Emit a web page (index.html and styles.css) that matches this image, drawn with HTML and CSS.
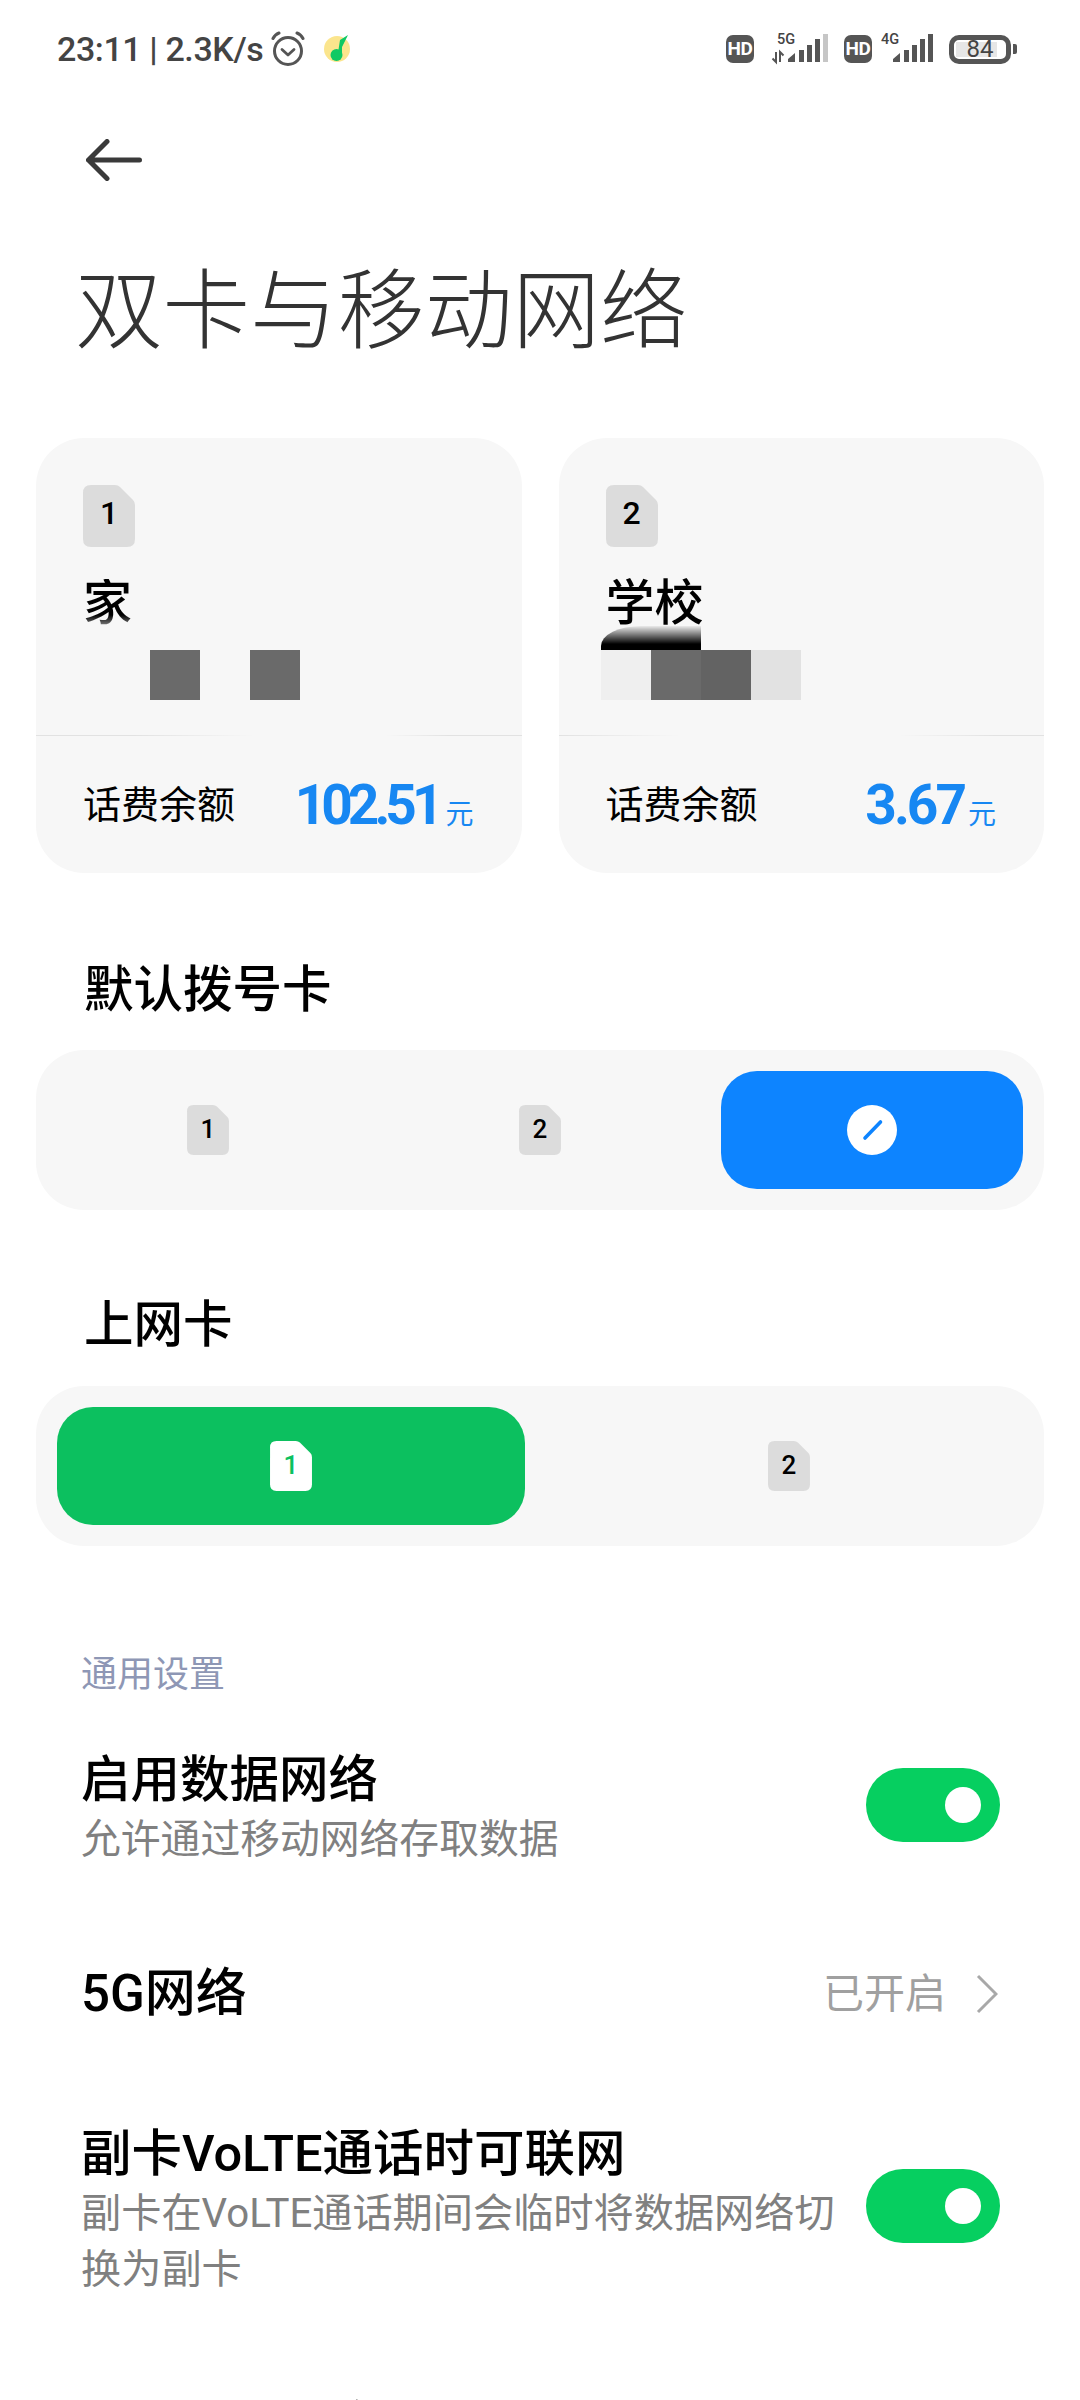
FILE: index.html
```html
<!DOCTYPE html>
<html lang="zh-CN">
<head>
<meta charset="utf-8">
<title>双卡与移动网络</title>
<link rel="stylesheet" href="styles.css">
</head>
<body>
<svg class="defs" width="0" height="0" aria-hidden="true">
  <symbol id="sim" viewBox="0 0 52 62"><path d="M8 0H32Q35 0 37 2L50 15Q52 17 52 20V54Q52 62 44 62H8Q0 62 0 54V8Q0 0 8 0Z"/></symbol>
</svg>
<main class="page">
  <header class="status">
    <div class="status-left">
      <span class="clock">23:11 | 2.3K/s</span>
      <svg class="alarm" viewBox="0 0 34 36" fill="none" stroke="#555" stroke-linecap="round" stroke-linejoin="round">
        <circle cx="17" cy="20" r="13.5" stroke-width="3"/>
        <path d="M11 18.5L17 24L23 18.5" stroke-width="2.8"/>
        <path d="M2 7.5Q4 3.5 8 2" stroke-width="3"/>
        <path d="M32 7.5Q30 3.5 26 2" stroke-width="3"/>
      </svg>
      <svg class="music" viewBox="0 0 34 34">
        <circle cx="17" cy="17" r="13" fill="#fbe58d"/>
        <path d="M17.5 24L20 8L28 3L22 15L22 24Z" fill="#0fc964"/>
        <circle cx="16.5" cy="23" r="6" fill="#0fc964"/>
      </svg>
    </div>
    <div class="status-right">
      <span class="hd">HD</span>
      <svg class="sig sig-5g" viewBox="0 -4 60 40">
        <text x="7" y="11" class="sig-text">5G</text>
        <path d="M6 19V29L2.500 25.500M10 29V19L13.500 22.500" fill="none" stroke="#555" stroke-width="2"/>
        <path d="M18 29V26L25 20V29ZM29 29V17H34V29ZM37 29V12H42V29ZM45 29V6H50V29Z" fill="#555"/>
        <path d="M53 29V1H58V29Z" fill="#c6c6c6"/>
      </svg>
      <span class="hd hd-b">HD</span>
      <svg class="sig sig-4g" viewBox="0 -4 55 40">
        <text x="1" y="11" class="sig-text">4G</text>
        <path d="M13 29V26L20 20V29ZM24 29V17H29V29ZM32 29V12H37V29ZM40 29V6H45V29ZM48 29V1H53V29Z" fill="#555"/>
      </svg>
      <span class="battery">84</span>
      <span class="nub"></span>
    </div>
  </header>

  <nav class="topbar">
    <svg class="back" viewBox="0 0 56 42" fill="none" stroke="#3a3a3a" stroke-width="5" stroke-linecap="round" stroke-linejoin="round">
      <path d="M21 2.500L2.500 21L21 39.500M2.500 21H53.500"/>
    </svg>
  </nav>

  <h1 class="title">双卡与移动网络</h1>

  <section class="cards">
    <article class="card">
      <div class="card-top">
        <div class="sim sim-lg"><svg class="sim-shape"><use href="#sim"/></svg><span class="sim-num">1</span></div>
        <div class="name name-fade">家</div>
        <div class="mosaic mosaic-home">
          <span class="cell dark"></span><span class="cell"></span><span class="cell dark"></span>
        </div>
      </div>
      <div class="divider divider-a"></div>
      <div class="balance">
        <span class="balance-label">话费余额</span>
        <span class="balance-value"><b class="amount amount-tight">102.51</b><small class="unit">元</small></span>
      </div>
    </article>
    <article class="card">
      <div class="card-top">
        <div class="sim sim-lg"><svg class="sim-shape"><use href="#sim"/></svg><span class="sim-num">2</span></div>
        <div class="name">学校</div>
        <div class="mosaic mosaic-school">
          <span class="smear"></span>
          <span class="cell pale"></span><span class="cell dark"></span><span class="cell darker"></span><span class="cell light"></span>
        </div>
      </div>
      <div class="divider divider-b"></div>
      <div class="balance">
        <span class="balance-label">话费余额</span>
        <span class="balance-value"><b class="amount">3.67</b><small class="unit">元</small></span>
      </div>
    </article>
  </section>

  <h2 class="section-title first">默认拨号卡</h2>
  <div class="segment">
    <div class="seg-item"><div class="sim sim-sm"><svg class="sim-shape"><use href="#sim"/></svg><span class="sim-num">1</span></div></div>
    <div class="seg-item"><div class="sim sim-sm"><svg class="sim-shape"><use href="#sim"/></svg><span class="sim-num">2</span></div></div>
    <div class="seg-item active-blue">
      <svg class="edit" viewBox="0 0 50 50"><circle cx="25" cy="25" r="25" fill="#fff"/><path d="M18 33L33.500 17" stroke="#0d84ff" stroke-width="3.600" stroke-linecap="round"/></svg>
    </div>
  </div>

  <h2 class="section-title second">上网卡</h2>
  <div class="segment">
    <div class="seg-item active-green"><div class="sim sim-sm sim-on"><svg class="sim-shape"><use href="#sim"/></svg><span class="sim-num">1</span></div></div>
    <div class="seg-item"><div class="sim sim-sm"><svg class="sim-shape"><use href="#sim"/></svg><span class="sim-num">2</span></div></div>
  </div>

  <div class="group-label">通用设置</div>

  <div class="row row-1">
    <div class="row-text">
      <div class="row-title">启用数据网络</div>
      <div class="row-sub">允许通过移动网络存取数据</div>
    </div>
    <span class="toggle"><i class="thumb"></i></span>
  </div>

  <div class="row row-2">
    <div class="row-title">5G网络</div>
    <div class="row-value">已开启
      <svg class="chevron" viewBox="0 0 22 40" fill="none" stroke="#a8a8a8" stroke-width="3"><path d="M2 2L20 20L2 38"/></svg>
    </div>
  </div>

  <div class="row row-3">
    <div class="row-text">
      <div class="row-title">副卡VoLTE通话时可联网</div>
      <div class="row-sub">副卡在VoLTE通话期间会临时将数据网络切换为副卡</div>
    </div>
    <span class="toggle"><i class="thumb"></i></span>
  </div>

  <div class="row row-4">
    <div class="row-title">智能切换网络</div>
  </div>
</main>
</body>
</html>
```
FILE: styles.css
```css
* { box-sizing: border-box; }
html, body { margin: 0; padding: 0; background: #fff; }
body { font-family: Roboto, "Noto Sans CJK SC", sans-serif; color: #000; }
.defs { position: absolute; }
.page { width: 1080px; height: 2400px; overflow: hidden; }

/* status bar */
.status { display: flex; justify-content: space-between; align-items: center; height: 64px; margin-top: 17px; padding: 0 63px 0 57px; }
.status-left, .status-right { display: flex; align-items: center; }
.clock { font-size: 34px; font-weight: 500; color: #444; line-height: 40px; letter-spacing: -0.4px; }
.alarm { width: 34px; height: 36px; margin-left: 8px; }
.music { width: 34px; height: 34px; margin-left: 15px; }
.hd { width: 28px; height: 28px; border-radius: 7px; background: #555; color: #fff; font-size: 19px; font-weight: 700; line-height: 28px; text-align: center; letter-spacing: -0.5px; }
.hd-b { margin-left: 14px; }
.sig { height: 40px; display: block; }
.sig-5g { width: 60px; margin-left: 16px; }
.sig-4g { width: 55px; margin-left: 8px; }
.sig-text { font-family: Roboto, sans-serif; font-size: 14.500px; font-weight: 500; fill: #444; }
.battery { width: 62px; height: 29px; margin-left: 14px; border: 5px solid #555; border-radius: 10px; font-size: 24px; line-height: 19px; color: #444; text-align: center; background: linear-gradient(#e6e6e6, #e6e6e6) 2px 2px / 41px 15px no-repeat; }
.nub { width: 4px; height: 10px; margin-left: 2px; border-radius: 0 2px 2px 0; background: #555; }

/* header */
.topbar { padding: 58px 0 0 86px; height: 101px; }
.back { display: block; width: 56px; height: 42px; }
.title { margin: 70px 0 0 75px; font-size: 87.500px; font-weight: 300; line-height: 120px; color: #333; white-space: nowrap; }

/* sim cards */
.cards { display: flex; gap: 37px; margin: 66px 36px 0; }
.card { flex: 1; height: 435px; border-radius: 48px; background: #f7f7f7; }
.card-top { height: 297px; padding: 47px 0 0 47px; }
.sim { position: relative; display: flex; align-items: center; justify-content: center; }
.sim-shape { position: absolute; inset: 0; width: 100%; height: 100%; fill: #dcdcdc; }
.sim-num { position: relative; font-weight: 500; color: #000; }
.sim-lg { width: 52px; height: 62px; }
.sim-lg .sim-num { font-size: 32px; margin: -6px 0 0 0; }
.sim-sm { width: 42px; height: 50px; }
.sim-sm .sim-num { font-size: 26px; margin: -2px 0 0 0; }
.sim-on .sim-shape { fill: #fff; }
.sim-on .sim-num { color: #0cc05f; }
.name { height: 50px; margin: 32px 0 0 0; font-size: 49px; font-weight: 500; line-height: 50px; white-space: nowrap; }
.name-fade { width: 49px; background: linear-gradient(#000 72%, #aaa 100%); -webkit-background-clip: text; background-clip: text; color: transparent; }
.mosaic { position: relative; display: flex; height: 50px; margin-top: 21px; }
.mosaic-home { margin-left: 67px; }
.mosaic-school { margin-left: -5px; }
.cell { width: 50px; height: 50px; }
.dark { background: #6a6a6a; }
.darker { background: #636363; }
.pale { background: #efefef; }
.light { background: #e2e2e2; }
.smear { position: absolute; left: 0; top: -24px; width: 100px; height: 24px; border-top-left-radius: 40px 20px; background: linear-gradient(rgba(0,0,0,0.05), #000 75%); }
.divider { height: 1px; }
.divider-a { background: linear-gradient(90deg, #e2e2e2 0, #e2e2e2 20%, #f7f7f7 45%, #f7f7f7 72%, #e2e2e2 85%, #e2e2e2 100%); }
.divider-b { background: linear-gradient(90deg, #e2e2e2 0, #f7f7f7 25%, #f7f7f7 70%, #e2e2e2 90%, #e2e2e2 100%); }
.balance { display: flex; justify-content: space-between; align-items: center; height: 137px; padding: 0 48px 0 47px; }
.balance-label { font-size: 38px; line-height: 60px; }
.balance-value { color: #1787f2; white-space: nowrap; }
.amount { font-size: 55px; font-weight: 700; line-height: 60px; letter-spacing: -3px; }
.amount-tight { letter-spacing: -5px; }
.unit { font-size: 28px; margin-left: 4px; }
.amount-tight + .unit { margin-left: 7px; }

/* sections */
.section-title { margin: 0 0 0 84px; font-size: 49.500px; font-weight: 500; line-height: 60px; }
.first { margin-top: 87px; }
.second { margin-top: 85px; }
.segment { display: flex; gap: 30px; height: 160px; margin: 30px 36px 0; padding: 21px; border-radius: 48px; background: #f7f7f7; }
.second + .segment { margin-top: 31px; }
.seg-item { flex: 1; display: flex; align-items: center; justify-content: center; border-radius: 36px; }
.active-blue { background: #0d84ff; }
.active-green { background: #0cc05f; }
.edit { width: 50px; height: 50px; }

/* settings */
.group-label { margin: 104px 0 0 81px; font-size: 36px; line-height: 50px; color: #8e97b5; }
.row { display: flex; justify-content: space-between; align-items: center; padding: 0 80px 0 81px; }
.row-1 { margin-top: 52px; }
.row-2 { margin-top: 98px; }
.row-3 { margin-top: 104px; }
.row-4 { margin-top: 100px; }
.row-text { width: 760px; }
.row-title { font-size: 49.500px; font-weight: 500; line-height: 56px; white-space: nowrap; }
.row-2 .row-title { font-size: 51px; }
.row-3 .row-title { font-size: 50.500px; }
.row-sub { margin-top: 4px; font-size: 39.800px; line-height: 56px; color: #808080; }
.row-3 .row-sub { font-size: 40.200px; }
.toggle { display: flex; align-items: center; justify-content: flex-end; width: 134px; height: 74px; margin-bottom: 10px; padding-right: 19px; border-radius: 37px; background: #06cf60; }
.row-3 .toggle { margin-bottom: 13px; }
.thumb { display: block; width: 36px; height: 36px; border-radius: 50%; background: #fff; }
.row-value { display: flex; align-items: center; gap: 30px; margin-right: 2px; font-size: 41px; line-height: 56px; color: #a0a0a0; }
.chevron { width: 22px; height: 40px; }
```
